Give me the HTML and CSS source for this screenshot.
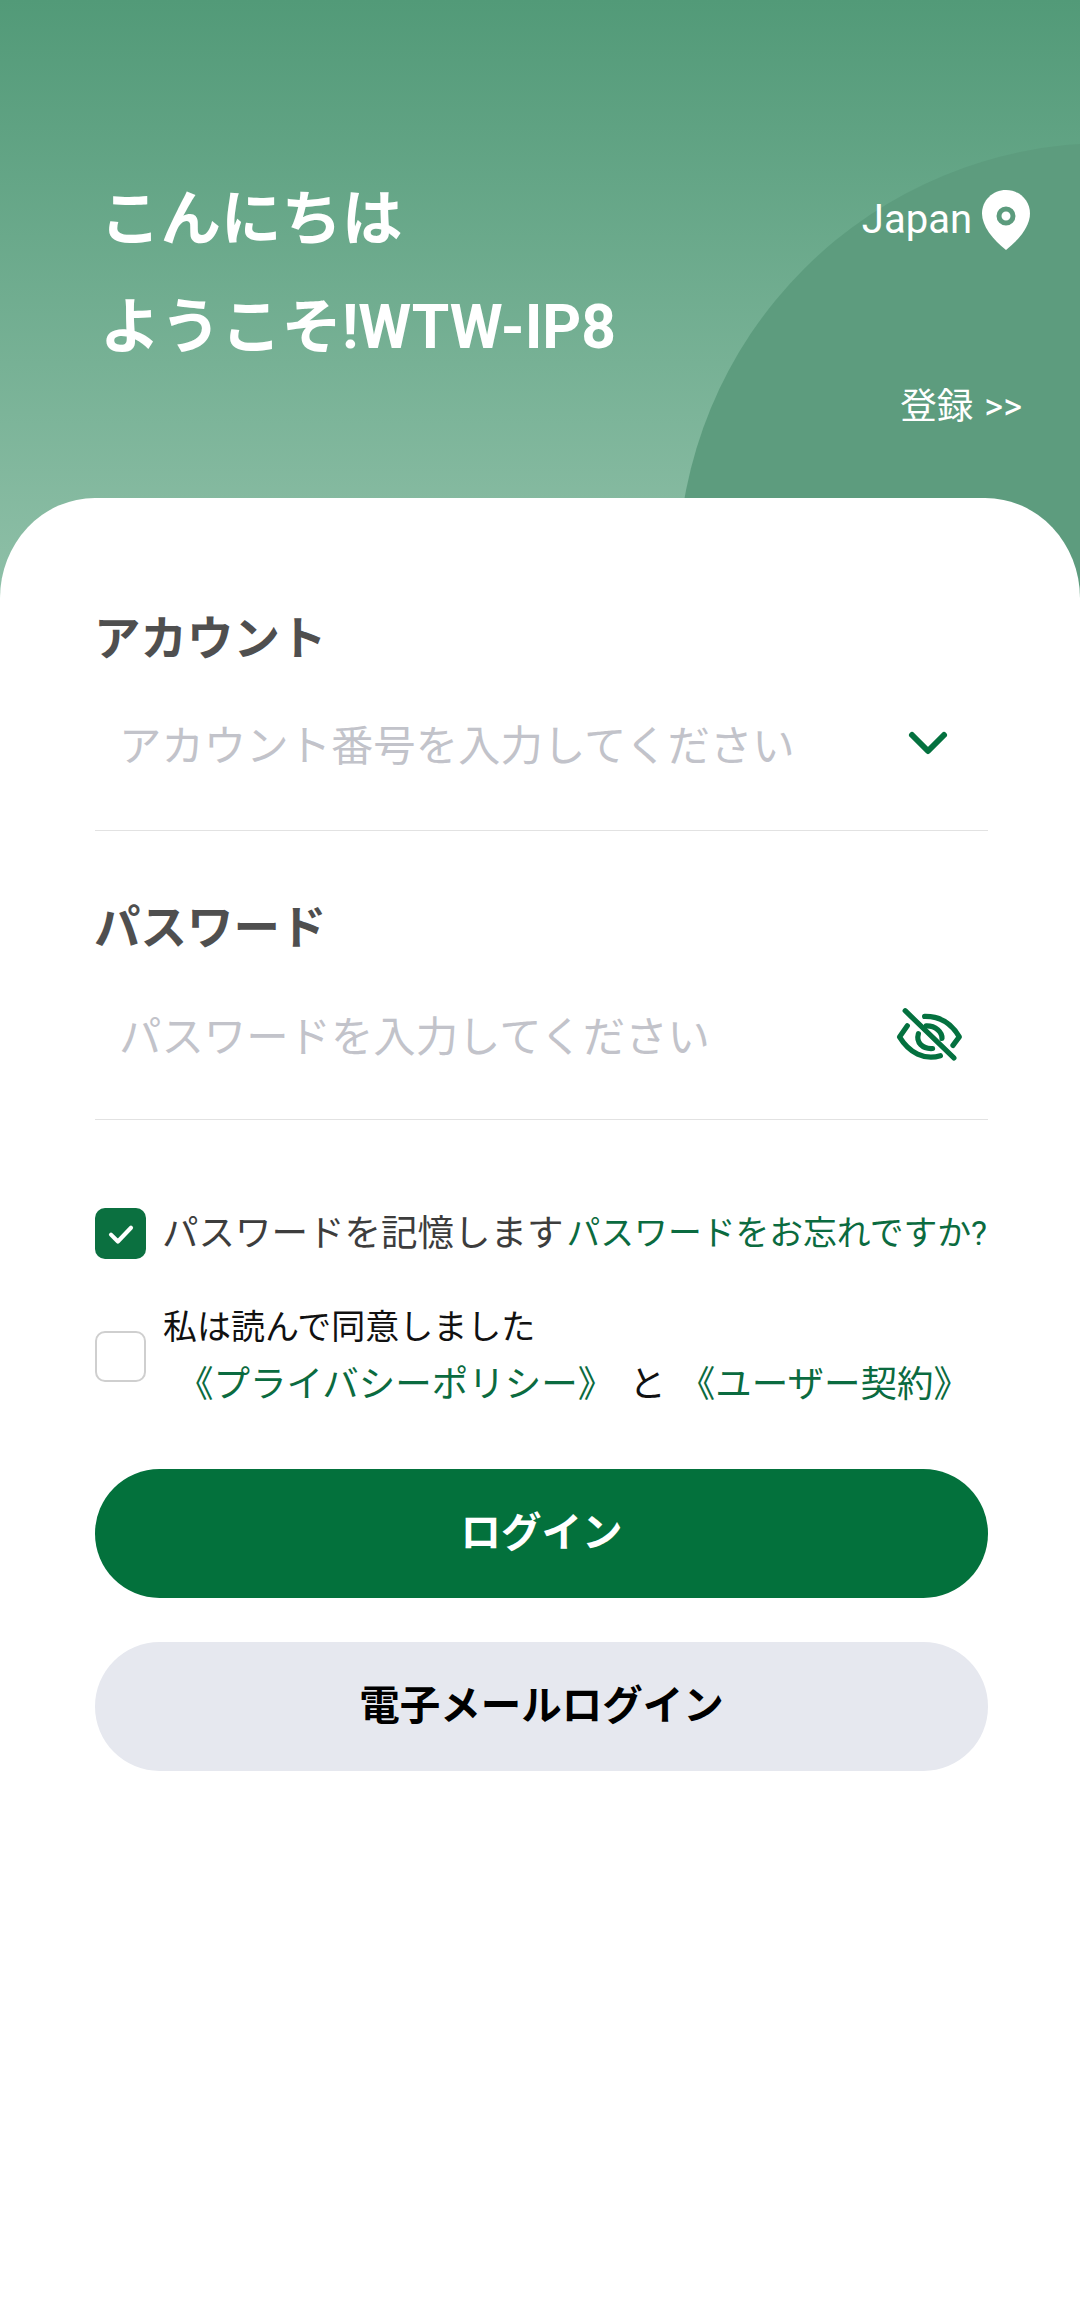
FILE: index.html
```html
<!DOCTYPE html>
<html lang="ja">
<head>
    <meta charset="UTF-8">
    <meta name="viewport" content="width=device-width, initial-scale=1.0">
    <title>ログイン</title>
    <link rel="stylesheet" href="styles.css">
</head>
<body>
    <header class="hero">
        <div class="hero-row">
            <h1 class="greeting">こんにちは<br>ようこそ!WTW-IP8</h1>
            <div class="hero-side">
                <div class="region">
                    <span class="region-name">Japan</span>
                    <svg class="pin" viewBox="0 0 48 60">
                        <path d="M24 0C10.700 0 0 10.500 0 23.500C0 36 11 50 24 60C37 50 48 36 48 23.500C48 10.500 37.300 0 24 0Z" fill="#fff"/>
                        <circle cx="24" cy="26" r="7" fill="none" stroke="#5c9b7d" stroke-width="5"/>
                    </svg>
                </div>
                <a class="register">登録 <span class="arrows">&gt;&gt;</span></a>
            </div>
        </div>
    </header>

    <main class="sheet">
        <section class="field">
            <h2 class="field-label">アカウント</h2>
            <div class="field-input">
                <span class="placeholder">アカウント番号を入力してください</span>
                <svg class="chevron" viewBox="0 0 44 26">
                    <path d="M6 5L22 21L38 5" fill="none" stroke="#04713f" stroke-width="6" stroke-linecap="round" stroke-linejoin="round"/>
                </svg>
            </div>
        </section>

        <section class="field field-second">
            <h2 class="field-label">パスワード</h2>
            <div class="field-input">
                <span class="placeholder">パスワードを入力してください</span>
                <svg class="eye" viewBox="0 0 72 60">
                    <g fill="none" stroke="#04713f" stroke-width="5.500" stroke-linecap="round" stroke-linejoin="round">
                        <path d="M9.700 4.300L61.300 54.300"/>
                        <path d="M30.300 10.300C46 10 59 18 67 32L60.300 41"/>
                        <path d="M12 20.300L3.700 32C14 49 30 57 47 52"/>
                        <path d="M32 20.300C42 20 49 27 48.700 33.700"/>
                        <path d="M23.700 28.700C21 38 28 45 38.700 44.300"/>
                    </g>
                </svg>
            </div>
        </section>

        <div class="options">
            <div class="option-row remember">
                <span class="check checked">
                    <svg viewBox="0 0 24 24"><path d="M4 12.500L9.500 18L20 7" fill="none" stroke="#fff" stroke-width="3.300" stroke-linecap="round" stroke-linejoin="round"/></svg>
                </span>
                <span class="remember-text">パスワードを記憶します</span>
                <a class="link forgot">パスワードをお忘れですか?</a>
            </div>
            <div class="option-row agree">
                <span class="check"></span>
                <div class="agree-text">
                    <p class="agree-line">私は読んで同意しました</p>
                    <p class="agree-links"><a class="link">《プライバシーポリシー》</a><span class="and">と</span><a class="link">《ユーザー契約》</a></p>
                </div>
            </div>
        </div>

        <button class="btn btn-primary">ログイン</button>
        <button class="btn btn-secondary">電子メールログイン</button>
    </main>
</body>
</html>
```

FILE: styles.css
```css
*{
    box-sizing: border-box;
}

body{
    margin: 0;
    height: 2320px;
    background-color: #fff;
    font-family: Roboto, "Noto Sans CJK JP", sans-serif;
    overflow: hidden;
}

.hero{
    position: relative;
    height: 600px;
    padding: 166px 50px 0 100px;
    background: linear-gradient(180deg, #529a78 0%, #8fc0a8 100%);
    color: #fff;
    overflow: hidden;
}

/* darker circle on the right of the header */
.hero::before{
    content: "";
    position: absolute;
    left: 678px;
    top: 143px;
    width: 860px;
    height: 860px;
    border-radius: 50%;
    background-color: #5d9c7e;
}

.hero-row{
    position: relative;
    display: flex;
    justify-content: space-between;
}

.greeting{
    margin: 0;
    font-size: 60.500px;
    line-height: 108px;
    font-weight: 700;
}

.hero-side{
    display: flex;
    flex-direction: column;
    align-items: flex-end;
}

.region{
    display: flex;
    align-items: center;
    gap: 10px;
    margin-top: 24px;
    font-size: 40px;
}

.region-name{
    margin-bottom: 2px;
}

.pin{
    width: 48px;
    height: 60px;
}

.register{
    margin-top: 131px;
    margin-right: 8px;
    font-size: 36.500px;
    line-height: 52px;
    word-spacing: 2px;
}

.arrows{
    font-size: 36px;
}

.sheet{
    position: relative;
    display: flex;
    flex-direction: column;
    margin-top: -102px;
    padding: 113px 92px 0 94px;
    height: 1822px;
    background-color: #fff;
    border-radius: 95px 95px 0 0 / 100px 100px 0 0;
}

.field-label{
    margin: 0;
    font-size: 46.500px;
    line-height: 56px;
    font-weight: 700;
    color: #4f4f4f;
}

.field-second{
    margin-top: 69px;
}

.field-input{
    display: flex;
    justify-content: space-between;
    align-items: center;
    height: 164px;
    padding: 0 25px 0 24px;
    margin-left: 1px;
    border-bottom: 1px solid #e2e2e2;
}

.placeholder{
    margin-bottom: 12px;
    font-size: 42.400px;
    color: #c2c3ca;
}

.field-second .placeholder{
    margin-bottom: 9px;
}

.chevron{
    width: 44px;
    height: 26px;
    margin-right: 13px;
    margin-bottom: 12px;
}

.eye{
    width: 68px;
    height: 60px;
    margin-right: -1px;
    margin-bottom: 6px;
}

.options{
    display: flex;
    flex-direction: column;
    margin-top: 88px;
    margin-left: 1px;
}

.option-row{
    display: flex;
    align-items: center;
}

.remember{
    height: 51px;
}

.check{
    flex: none;
    display: flex;
    align-items: center;
    justify-content: center;
    width: 51px;
    height: 51px;
    border: 2px solid #cfcfcf;
    border-radius: 10px;
    background-color: #fff;
}

.check.checked{
    border: none;
    background-color: #0b7040;
}

.check svg{
    width: 30px;
    height: 30px;
}

.remember-text{
    margin-left: 16px;
    margin-bottom: 7px;
    font-size: 36.500px;
    color: #3d3d3d;
    white-space: nowrap;
}

.link{
    color: #0b6b40;
}

.forgot{
    margin-left: 3px;
    margin-bottom: 7px;
    font-size: 33.800px;
    white-space: nowrap;
}

.agree{
    margin-top: 43px;
}

.agree-text{
    margin-left: 17px;
    color: #111;
}

.agree-line{
    margin: 0;
    font-size: 34px;
    line-height: 50px;
}

.agree-links{
    margin: 8px 0 0;
    padding-left: 14px;
    font-size: 36.500px;
    line-height: 50px;
    white-space: nowrap;
}

.and{
    margin: 0 13px 0 15px;
}

.btn{
    display: block;
    width: 893px;
    height: 129px;
    margin-left: 1px;
    padding: 0 0 8px;
    border: none;
    border-radius: 65px;
    font-family: inherit;
    font-size: 40.500px;
    font-weight: 700;
}

.btn-primary{
    margin-top: 59px;
    background-color: #03713c;
    color: #fff;
}

.btn-secondary{
    margin-top: 44px;
    background-color: #e6e8ef;
    color: #000;
}
```
